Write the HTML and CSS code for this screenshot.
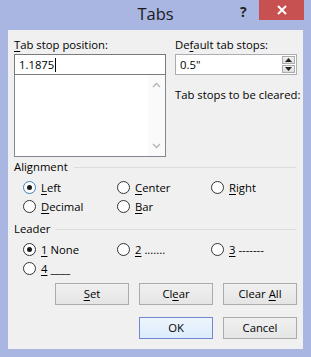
FILE: index.html
```html
<!DOCTYPE html>
<html lang="en">
<head>
<meta charset="UTF-8">
<title>Tabs</title>
<link rel="stylesheet" href="styles.css">
</head>
<body>

<div class="window">
  <!-- title bar -->
  <div class="titlebar">
    <div class="title">Tabs</div>
    <div class="help">?</div>
    <div class="close">
      <svg width="10" height="10" viewBox="0 0 10 10"><path d="M1 1 L9 9 M9 1 L1 9" stroke="#fff" stroke-width="2"/></svg>
    </div>
  </div>

  <div class="client">
    <div class="top">
      <div class="col-left">
        <div class="label"><u>T</u>ab stop position:</div>
        <div class="input focus">1.1875<span class="caret"></span></div>
        <div class="listbox">
          <div class="scroll">
            <svg width="9" height="6" viewBox="0 0 9 6"><path d="M1 5 L4.5 1.5 L8 5" fill="none" stroke="#b5b5b5" stroke-width="1.4"/></svg>
            <svg width="9" height="6" viewBox="0 0 9 6"><path d="M1 1 L4.5 4.5 L8 1" fill="none" stroke="#b5b5b5" stroke-width="1.4"/></svg>
          </div>
        </div>
      </div>
      <div class="col-right">
        <div class="label">De<u>f</u>ault tab stops:</div>
        <div class="input spin">
          <span>0.5"</span>
          <div class="spin-btns">
            <div class="spin-btn"><svg width="7" height="4" viewBox="0 0 7 4"><path d="M0 4 L3.5 0 L7 4 Z" fill="#222"/></svg></div>
            <div class="spin-btn"><svg width="7" height="4" viewBox="0 0 7 4"><path d="M0 0 L3.5 4 L7 0 Z" fill="#222"/></svg></div>
          </div>
        </div>
        <div class="label cleared">Tab stops to be cleared:</div>
      </div>
    </div>

    <div class="group align">
      <div class="group-title"><span>Alignment</span></div>
      <div class="radios">
        <div class="radio"><span class="dot checked hot"></span><span><u>L</u>eft</span></div>
        <div class="radio"><span class="dot"></span><span><u>C</u>enter</span></div>
        <div class="radio"><span class="dot"></span><span><u>R</u>ight</span></div>
        <div class="radio"><span class="dot"></span><span><u>D</u>ecimal</span></div>
        <div class="radio"><span class="dot"></span><span><u>B</u>ar</span></div>
      </div>
    </div>

    <div class="group">
      <div class="group-title"><span>Leader</span></div>
      <div class="radios">
        <div class="radio"><span class="dot checked"></span><span><u>1</u> None</span></div>
        <div class="radio"><span class="dot"></span><span><u>2</u> .......</span></div>
        <div class="radio"><span class="dot"></span><span><u>3</u> -------</span></div>
        <div class="radio"><span class="dot"></span><span><u>4</u> ____</span></div>
      </div>
    </div>

    <div class="buttons first">
      <div class="btn"><u>S</u>et</div>
      <div class="btn">Cl<u>e</u>ar</div>
      <div class="btn">Clear <u>A</u>ll</div>
    </div>
    <div class="buttons">
      <div class="btn default">OK</div>
      <div class="btn">Cancel</div>
    </div>
  </div>
</div>

</body>
</html>
```

FILE: styles.css
```css
body { margin: 0; font-family: "Open Sans", "Noto Sans", sans-serif; font-size: 11.3px; color: #000; }
u { text-decoration: underline; text-underline-offset: 2px; }

.window {
  width: 311px;
  height: 357px;
  background: #aab6e2;
  display: flex;
  flex-direction: column;
}
.titlebar {
  height: 30px;
  position: relative;
  display: flex;
  justify-content: center;
}
.title {
  font-family: "Open Sans", sans-serif;
  font-size: 16.5px;
  line-height: 28px;
  color: #1a1a1a;
}
.help {
  position: absolute;
  left: 240px;
  top: 2px;
  font-weight: bold;
  font-size: 14px;
  color: #222;
}
.close {
  position: absolute;
  left: 259px;
  top: 0;
  width: 45px;
  height: 20px;
  background: #c75050;
  display: flex;
  align-items: center;
  justify-content: center;
}

.client {
  margin: 0 8px 8px 8px;
  flex: 1;
  background: #f0f0f0;
  padding: 7px 6px 0 6px;
}
.top { display: flex; gap: 9px; }
.col-left { width: 152px; }
.col-right { width: 122px; }
.label { line-height: 16px; margin-bottom: 1px; white-space: nowrap; }
.cleared { margin-top: 12px; }

.input {
  height: 19px;
  border: 1px solid #abadb3;
  background: #fff;
  padding-left: 4px;
  line-height: 19px;
  display: flex;
  align-items: center;
}
.input.focus { border-color: #7a7a7a; }
.caret { display: inline-block; width: 1px; height: 14px; background: #000; margin-left: 1px; }

.listbox {
  height: 81px;
  border: 1px solid #828790;
  border-top: none;
  background: #fff;
  display: flex;
  justify-content: flex-end;
}
.scroll {
  width: 17px;
  background: #fafafa;
  display: flex;
  flex-direction: column;
  justify-content: space-between;
  align-items: center;
  padding: 7px 0;
}

.spin { justify-content: space-between; padding-right: 1px; }
.spin-btns { display: flex; flex-direction: column; gap: 1px; }
.spin-btn {
  width: 13px;
  height: 8px;
  background: linear-gradient(#f2f2f2, #dcdcdc);
  border: 1px solid #acacac;
  display: flex;
  align-items: center;
  justify-content: center;
  box-sizing: border-box;
}

.group-title {
  display: flex;
  align-items: center;
  gap: 6px;
  margin-top: 5px;
  line-height: 18px;
}
.group.align .group-title { margin-top: 1px; }
.group-title::after { content: ""; flex: 1; height: 1px; background: #dcdcdc; margin-right: 1px; }
.radios {
  display: grid;
  grid-template-columns: 94px 94px 1fr;
  padding-left: 9px;
  row-gap: 1px;
  margin-top: 2px;
}
.radio { display: flex; align-items: center; gap: 5px; height: 18px; white-space: pre; }
.dot {
  width: 11px;
  height: 11px;
  border: 1px solid #333;
  border-radius: 50%;
  background: #fff;
  display: flex;
  align-items: center;
  justify-content: center;
}
.dot.hot { border-color: #3c7fb1; }
.dot.checked::after {
  content: "";
  width: 5px;
  height: 5px;
  border-radius: 50%;
  background: #1a1a1a;
}

.buttons {
  display: flex;
  justify-content: flex-end;
  gap: 10px;
  margin-top: 12px;
}
.buttons.first { margin-top: 6px; }
.btn {
  width: 72px;
  height: 20px;
  border: 1px solid #acacac;
  background: linear-gradient(#f0f0f0, #e5e5e5);
  text-align: center;
  line-height: 20px;
}
.btn.default { border-color: #6f87d4; background: linear-gradient(#ecf4fc, #dcecfc); }
```
